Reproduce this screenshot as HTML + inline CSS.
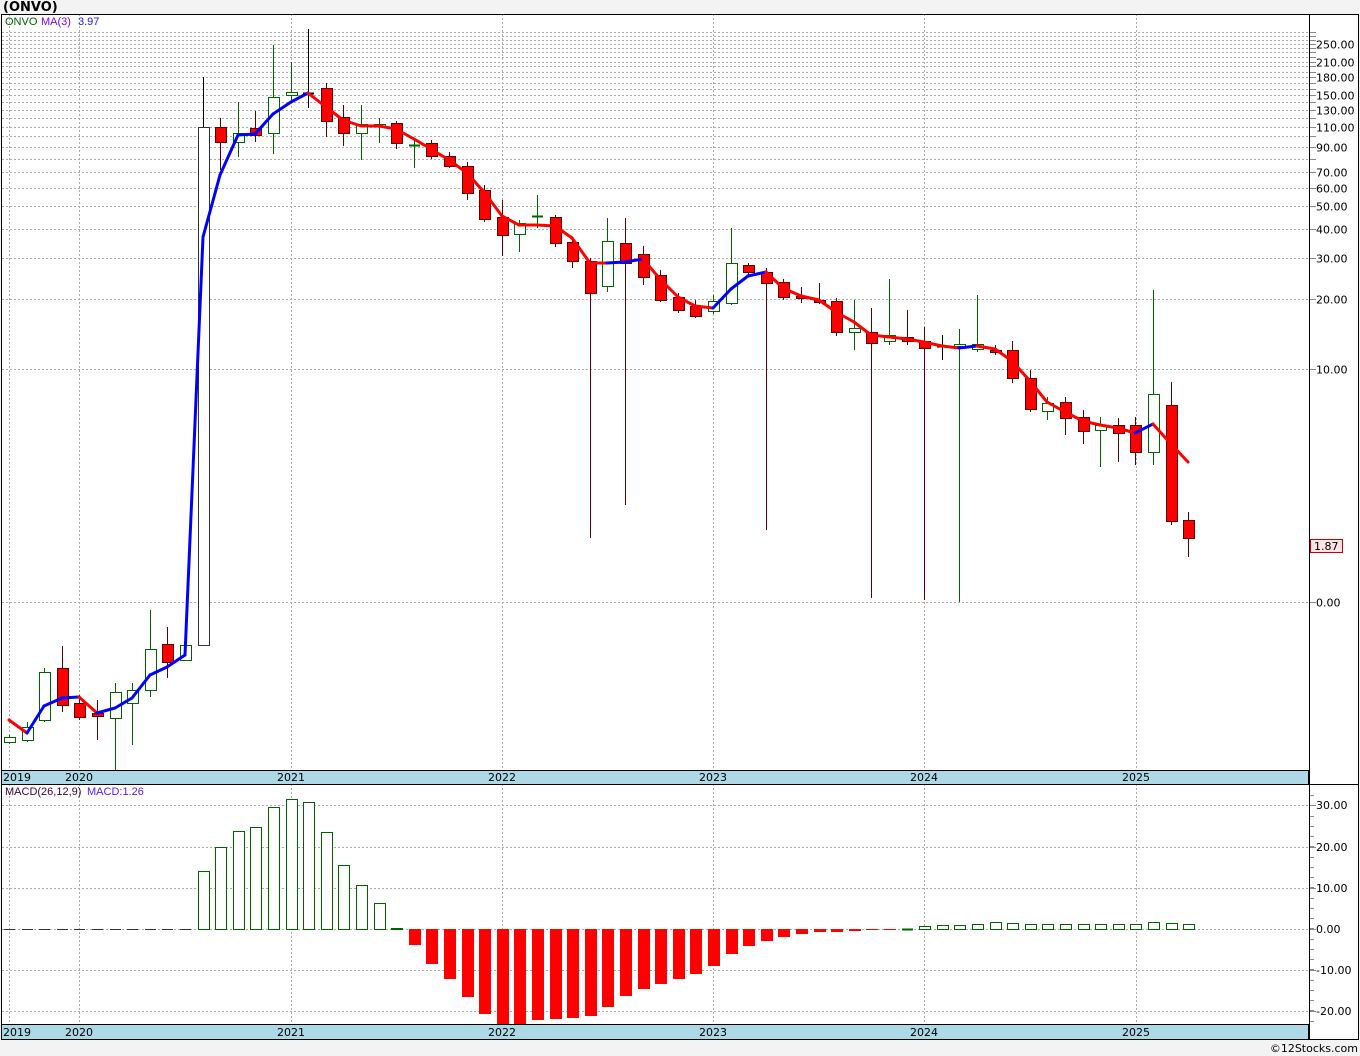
<!DOCTYPE html>
<html><head><meta charset="utf-8"><style>
html,body{margin:0;padding:0;background:#f3f3f3;width:1360px;height:1056px;overflow:hidden}
svg{display:block}
text{font-family:"DejaVu Sans","Liberation Sans",sans-serif;font-size:11px}
.lg{font-family:"Liberation Sans",sans-serif;font-size:11px}
</style></head><body>
<svg id="s" width="1360" height="1056" xmlns="http://www.w3.org/2000/svg">
<rect x="1" y="14" width="1358" height="1026" fill="#fff"/>
<text x="3" y="11" style="font-size:13px;font-weight:bold" fill="#000">(ONVO)</text>
<g id="g"></g>
<text class="lg" x="5" y="25" fill="#006400">ONVO</text>
<text class="lg" x="41" y="25" style="fill:#7b00ff">MA(3)</text>
<text class="lg" x="78" y="25" fill="#1a1aff">3.97</text>
<text class="lg" x="5" y="795" fill="#400040">MACD(26,12,9)</text>
<text class="lg" x="87" y="795" fill="#5a1aff">MACD:1.26</text>
<text x="1358" y="1052" text-anchor="end" fill="#000">©12Stocks.com</text>
</svg>
<script>
var g=document.getElementById('g'),h='';
function L(x1,y1,x2,y2,c,w,d){h+='<line x1="'+x1+'" y1="'+y1+'" x2="'+x2+'" y2="'+y2+'" stroke="'+c+'" stroke-width="'+(w||1)+'"'+(d?' stroke-dasharray="'+d+'"':'')+'/>';}
function R(x,y,w,hh,f,s){h+='<rect x="'+x+'" y="'+y+'" width="'+w+'" height="'+hh+'" fill="'+f+'" stroke="'+s+'"/>';}
function T(x,y,t,c,a){h+='<text x="'+x+'" y="'+y+'" fill="'+(c||'#000')+'"'+(a?' text-anchor="'+a+'"':'')+'>'+t+'</text>';}
function py(p){return 369-101*Math.log(p/10);}
var lab={250:1,210:1,180:1,150:1,130:1,110:1,90:1,70:1,60:1,50:1,40:1,30:1,20:1,10:1};
for(var p=10;p<=500;p+=10){var y=Math.round(py(p))+.5;if(y<30)continue;L(2,y,1309,y,'#aaa',1,'2,2');L(1309,y,1316,y,'#888');if(lab[p])T(1316,y+4,p.toFixed(2),'#000');}
var y1=Math.round(py(1))+.5;L(2,y1,1309,y1,'#aaa',1,'2,2');L(1309,y1,1316,y1,'#888');T(1316,y1+4,'0.00');
[[805,'30.00'],[847,'20.00'],[888,'10.00'],[929,'0.00'],[970,'-10.00'],[1011,'-20.00']].forEach(function(a){L(2,a[0]+.5,1309,a[0]+.5,'#aaa',1,'2,2');L(1309,a[0]+.5,1316,a[0]+.5,'#888');T(1316,a[0]+4,a[1]);});
for(var y=795;y<1024;y+=10.25){L(1309,Math.round(y)+.5,1314,Math.round(y)+.5,'#888');}
var yrs=[[9,'2019',17],[79,'2020',79],[291,'2021',291],[502,'2022',502],[713,'2023',713],[924,'2024',924],[1136,'2025',1136]];
yrs.forEach(function(a){L(a[0]+.5,14,a[0]+.5,770,'#aaa',1,'2,2');L(a[0]+.5,784,a[0]+.5,1024,'#aaa',1,'2,2');});
var C=[[742,737,735,744,'g'],[740,727,722,742,'g'],[720,672,668,722,'g'],[668,705,646,712,'r'],[703,717,695,720,'r'],[713,716,700,740,'r'],[718,692,683,770,'g'],[703,690,683,745,'g'],[690,649,610,697,'g'],[644,662,627,678,'r'],[660,645,641,661,'g'],[645,127,77,645,'w'],[127,142,118,170,'r'],[142,133,102,157,'g'],[128,135,111,142,'r'],[133,97,45,154,'g'],[95,92,62,100,'g'],[93,93,29,108,'k'],[88,121,83,137,'r'],[117,133,105,146,'r'],[133,124,105,160,'g'],[126,124,118,143,'g'],[123,143,121,149,'r'],[145,145,140,168,'g'],[143,156,140,159,'r'],[156,166,152,168,'r'],[166,193,162,200,'r'],[190,219,185,222,'r'],[217,235,200,256,'r'],[234,223,220,252,'g'],[216,216,195,228,'g'],[217,243,215,247,'r'],[242,261,240,268,'r'],[261,293,258,538,'r'],[286,241,218,292,'g'],[243,263,218,505,'r'],[254,277,246,285,'r'],[275,300,270,302,'r'],[297,310,293,313,'r'],[306,316,300,318,'r'],[311,301,295,314,'g'],[303,263,228,305,'g'],[265,272,263,276,'r'],[272,283,268,530,'r'],[282,297,279,300,'r'],[296,298,287,303,'r'],[300,302,283,304,'r'],[301,332,298,336,'r'],[332,328,300,350,'g'],[332,343,308,598,'r'],[341,335,279,345,'g'],[337,341,310,345,'r'],[341,348,327,600,'r'],[346,346,335,360,'k'],[346,344,329,602,'g'],[349,344,295,352,'g'],[350,352,345,355,'r'],[350,378,341,383,'r'],[378,409,370,412,'r'],[411,403,397,420,'g'],[402,418,397,435,'r'],[417,431,410,444,'r'],[430,425,417,467,'g'],[425,433,418,462,'r'],[425,452,417,465,'r'],[452,394,290,465,'g'],[405,521,382,525,'r'],[520,538,512,557,'r']];
function cx(i){return Math.round(9+17.6*i);}
C.forEach(function(c,i){var x=cx(i),t=c[4];var col=t=='g'?'#006400':t=='r'?'#600000':'#000';
L(x+.5,c[2],x+.5,c[3],col,1);var top=Math.min(c[0],c[1]),bh=Math.abs(c[0]-c[1]);
if(bh<2){L(x-5,top+.5,x+6,top+.5,t=='r'?'#c00':col,2);}
else R(x-5+.5,top+.5,11,bh,t=='r'?'#f00':'#fff',t=='r'?'#600000':(t=='w'?'#333':col));});
var M=[720,733,706,698,697,713,708,698,675,667,655,237,175,135,134,114,102,93,107,120,126,126,129,139,149,160,173,192,216,225,225,226,238,263,263,262,259,279,297,306,308,289,276,272,288,296,300,312,322,335,337,339,342,346,348,346,349,361,381,402,412,421,425,428,433,424,444,462];
for(var i=0;i<M.length-1;i++){var c=M[i+1]<M[i]?'#0000ff':'#ff0000';h+='<line x1="'+cx(i)+'" y1="'+M[i]+'" x2="'+cx(i+1)+'" y2="'+M[i+1]+'" stroke="'+c+'" stroke-width="3" stroke-linecap="round"/>';}
R(1310.5,539.5,32,13,'#ffe4e4','#c00');T(1314,550,'1.87','#000');
var B=[929,929,929,929,929,929,929,929,929,929,929,871,847,831,827,807,799,802,832,865,885,903,928,945,964,979,997,1014,1024,1024,1020,1019,1018,1016,1007,996,989,984,979,974,966,954,946,941,937,934,932,932,931,930,930,929,926,925,925,924,922,923,924,924,924,924,924,924,924,922,923,924];
B.forEach(function(b,i){var x=cx(i);if(i<=10){L(x-5,929.5,x+6,929.5,'#333',1);return;}
if(b<929)R(x-5+.5,b+.5,11,929-b,'#fff','#006400');else if(b>929)R(x-5,929,12,b-929,'#f00','none');else L(x-5,929.5,x+6,929.5,'#006400',2);});
R(1.5,770.5,1307,14,'#add8e6','#000');R(1.5,1024.5,1307,15,'#add8e6','#000');
yrs.forEach(function(a){T(a[2],781,a[1],'#000','middle');T(a[2],1036,a[1],'#000','middle');});
R(1.5,14.5,1357,1025,'none','#000');L(1309.5,14,1309.5,1040,'#000');L(1309,784.5,1359,784.5,'#000');
g.innerHTML=h;
</script>
</body></html>
